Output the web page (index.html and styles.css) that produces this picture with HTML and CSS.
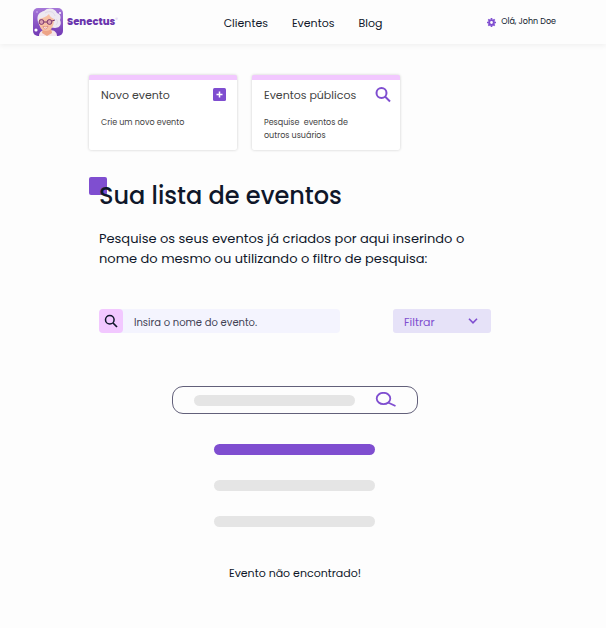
FILE: index.html
```html
<!DOCTYPE html>
<html lang="pt-BR">
<head>
<meta charset="utf-8">
<meta name="viewport" content="width=device-width, initial-scale=1">
<title>Senectus</title>
<link rel="stylesheet" href="styles.css">
</head>
<body>
<header class="header">
  <a class="brand" href="#">
    <svg class="brand-mark" viewBox="0 0 30 28" aria-hidden="true">
      <defs>
        <linearGradient id="sky" x1="0" y1="0" x2="0" y2="1"><stop offset="0" stop-color="#a678d8"/><stop offset="1" stop-color="#7138b4"/></linearGradient>
        <clipPath id="tile"><rect width="30" height="28" rx="5"/></clipPath>
      </defs>
      <g clip-path="url(#tile)">
        <rect width="30" height="28" fill="url(#sky)"/>
        <circle cx="3" cy="22" r="1.6" fill="#fff"/>
        <circle cx="27" cy="5" r="1" fill="#fff"/>
        <circle cx="4" cy="4" r=".7" fill="#e4cdf8"/>
        <path d="M6 28c0-4 3-6 7-6h4c5 0 7 3 7 6z" fill="#f6e6ea"/>
        <path d="M10 20h8l1 5-5 3-5-3z" fill="#eda487"/>
        <path d="M5 14C3 7 7 4 11 3c4-4 11-3 13 2 4 1 4 5 3 7 2 4 0 8-5 8L7 18z" fill="#eee9f1"/>
        <path d="M6 11c4-1 7-2 10-5 1 3 3 4 5 5 0 8-3 12-8 12S6 19 6 11z" fill="#f7c0a5"/>
        <path d="M12 5c5-3 9-1 10 3M23 11c2 2 2 4 0 6" fill="none" stroke="#dcd4e4" stroke-width=".8"/>
        <g fill="#dca0b1" stroke="#79336c" stroke-width="1"><circle cx="8.500" cy="14" r="2.400"/><circle cx="16.500" cy="14" r="2.400"/><path d="M11 14h3M19 13l3-1"/></g>
        <path d="M10 18.500q3 1.500 5-.5-1 3.500-3 3-1.500-.5-2-2.500z" fill="#fff" stroke="#c65d5b" stroke-width=".5"/>
      </g>
    </svg>
    <span class="brand-name">Senectus<sup class="brand-reg">®</sup></span>
  </a>
  <nav class="nav">
    <a href="#">Clientes</a>
    <a href="#">Eventos</a>
    <a href="#">Blog</a>
  </nav>
  <a class="user" href="#">
    <svg class="gear" viewBox="0 0 16 16" aria-hidden="true">
      <circle cx="8" cy="8" r="4.200" fill="none" stroke="currentColor" stroke-width="3.500"/>
      <path d="M8 0v3M8 13v3M0 8h3M13 8h3M2.300 2.300l2 2M11.700 11.700l2 2M2.300 13.700l2-2M11.700 4.300l2-2" stroke="currentColor" stroke-width="3"/>
    </svg>
    <span>Olá, John Doe</span>
  </a>
</header>

<main class="page">
  <section class="cards">
    <a class="card" href="#">
      <span class="card-head">
        <span class="card-title">Novo evento</span>
        <svg class="card-icon" viewBox="0 0 16 16" aria-hidden="true"><rect x="1" y="1" width="13" height="13" rx="1.500" fill="#7f4ed0"/><path d="M7.500 4.500v6M4.500 7.500h6" stroke="#fff" stroke-width="1.500"/></svg>
      </span>
      <span class="card-text">Crie um novo evento</span>
    </a>
    <a class="card" href="#">
      <span class="card-head">
        <span class="card-title">Eventos públicos</span>
        <svg class="card-icon" viewBox="0 0 16 16" aria-hidden="true"><circle cx="6.500" cy="6" r="5" fill="none" stroke="#7f4ed0" stroke-width="2"/><path d="M10 9.500l5 5" stroke="#7f4ed0" stroke-width="2"/></svg>
      </span>
      <span class="card-text">Pesquise&nbsp; eventos de outros usuários</span>
    </a>
  </section>

  <section class="events">
    <h1 class="title">Sua lista de eventos</h1>
    <p class="lead">Pesquise os seus eventos já criados por aqui inserindo o nome do mesmo ou utilizando o filtro de pesquisa:</p>

    <form class="filters">
      <div class="search">
        <button class="search-button" type="button" aria-label="Pesquisar">
          <svg class="search-icon" viewBox="0 0 14 14" aria-hidden="true"><circle cx="5.800" cy="5.800" r="4.300" fill="none" stroke="currentColor" stroke-width="1.500"/><path d="M9 9l4 4" stroke="currentColor" stroke-width="1.700"/></svg>
        </button>
        <input class="search-input" type="text" aria-label="Nome do evento" placeholder="Insira o nome do evento.">
      </div>
      <div class="filter">
        <select class="filter-select" aria-label="Filtrar"><option>Filtrar</option></select>
        <svg class="chevron" viewBox="0 0 10 6" aria-hidden="true"><path d="M1 .8l4 4 4-4" fill="none" stroke="currentColor" stroke-width="1.600"/></svg>
      </div>
    </form>

    <div class="empty">
      <div class="ghost-search">
        <span class="bar"></span>
        <svg class="ghost-icon" viewBox="0 0 22 16" aria-hidden="true"><ellipse cx="8.500" cy="6.500" rx="6.800" ry="5.700" fill="none" stroke="#7f4ed0" stroke-width="1.800"/><path d="M13 10.500l7.500 3.500" stroke="#7f4ed0" stroke-width="1.900"/></svg>
      </div>
      <div class="ghost-list">
        <span class="bar bar-active"></span>
        <span class="bar"></span>
        <span class="bar"></span>
      </div>
      <p class="empty-text">Evento não encontrado!</p>
    </div>
  </section>
</main>
</body>
</html>
```
FILE: styles.css
```css
* { box-sizing: border-box; }
body {
  margin: 0;
  background: #fdfdfd;
  color: #0f172a;
  font-family: Poppins, Inter, "Open Sans", sans-serif;
  font-size: 11px;
}
a { color: inherit; text-decoration: none; }
svg { display: block; flex: none; }

.header {
  display: grid;
  grid-template-columns: 1fr auto 1fr;
  align-items: center;
  height: 44px;
  padding: 0 33px;
  box-shadow: 0 2px 5px rgba(0, 0, 0, .05);
}
.brand { display: flex; align-items: center; gap: 4px; }
.brand-mark { width: 30px; height: 28px; }
.brand-name { color: #6b35ad; font-size: 10px; font-weight: 800; }
.brand-reg { color: #b99bdc; font-size: 5px; font-weight: 400; line-height: 1; }
.nav { display: flex; gap: 24px; margin-top: 2px; }
.user { display: flex; align-items: center; justify-self: end; gap: 5px; margin-right: 17px; font-size: 8px; }
.gear { width: 9px; height: 9px; color: #7f4ed0; }

.page { max-width: 428px; margin: 0 auto; padding: 31px 0 40px; }
.cards { display: grid; grid-template-columns: 148px 148px; gap: 15px; }
.card {
  min-height: 75px;
  padding: 6px 9px 8px 12px;
  border-top: 5px solid #f2c8ff;
  border-radius: 2px;
  background: #fff;
  box-shadow: 0 0 3px rgba(0, 0, 0, .2);
  color: #424242;
}
.card-head { display: flex; align-items: center; justify-content: space-between; }
.card-title { font-size: 11px; line-height: 18px; }
.card-icon { width: 16px; height: 16px; }
.card-text { display: block; max-width: 100px; margin-top: 12px; font-size: 8px; line-height: 13px; }

.events { margin: 27px 26px 0 10px; }
.title {
  position: relative;
  z-index: 0;
  margin: 0;
  padding-top: 2px;
  font-size: 24px;
  font-weight: 500;
  line-height: 34px;
}
.title::before {
  content: "";
  position: absolute;
  z-index: -1;
  top: 0;
  left: -10px;
  width: 18px;
  height: 18px;
  border-radius: 2px;
  background: #7f4ed0;
}
.lead { margin: 16px 0 0; font-size: 13px; line-height: 20px; }

.filters { display: flex; justify-content: space-between; margin-top: 40px; }
.search { display: flex; width: 241px; height: 24px; border-radius: 4px; background: #f4f4fe; }
.search-button {
  display: grid;
  place-items: center;
  width: 24px;
  padding: 0;
  border: 0;
  border-radius: 4px;
  background: #f2c8ff;
  color: #0f172a;
}
.search-icon { width: 14px; height: 14px; }
.search-input {
  flex: 1;
  min-width: 0;
  padding: 3px 11px 0;
  border: 0;
  background: transparent;
  font: inherit;
  font-size: 10px;
}
.search-input::placeholder { color: #424255; opacity: 1; }
.filter { position: relative; width: 98px; height: 24px; color: #7f4ed0; }
.filter-select {
  width: 100%;
  height: 100%;
  padding: 2px 11px 0;
  border: 0;
  border-radius: 3px;
  appearance: none;
  background: #e6e2f8;
  color: inherit;
  font: inherit;
}
.chevron { position: absolute; top: 9px; right: 13px; width: 10px; height: 6px; pointer-events: none; }

.empty { display: flex; flex-direction: column; align-items: center; margin-top: 53px; }
.ghost-search {
  display: flex;
  align-items: center;
  justify-content: space-between;
  width: 246px;
  height: 28px;
  padding: 0 20px 0 21px;
  border: 1px solid #62607a;
  border-radius: 11px;
}
.ghost-icon { width: 22px; height: 16px; }
.bar { display: block; width: 161px; height: 11px; border-radius: 6px; background: #e5e5e5; }
.bar-active { background: #7f4ed0; }
.ghost-list { display: grid; gap: 25px; margin: 30px 2px 0 0; }
.empty-text { margin: 37px 0 0; line-height: 18px; }
```
